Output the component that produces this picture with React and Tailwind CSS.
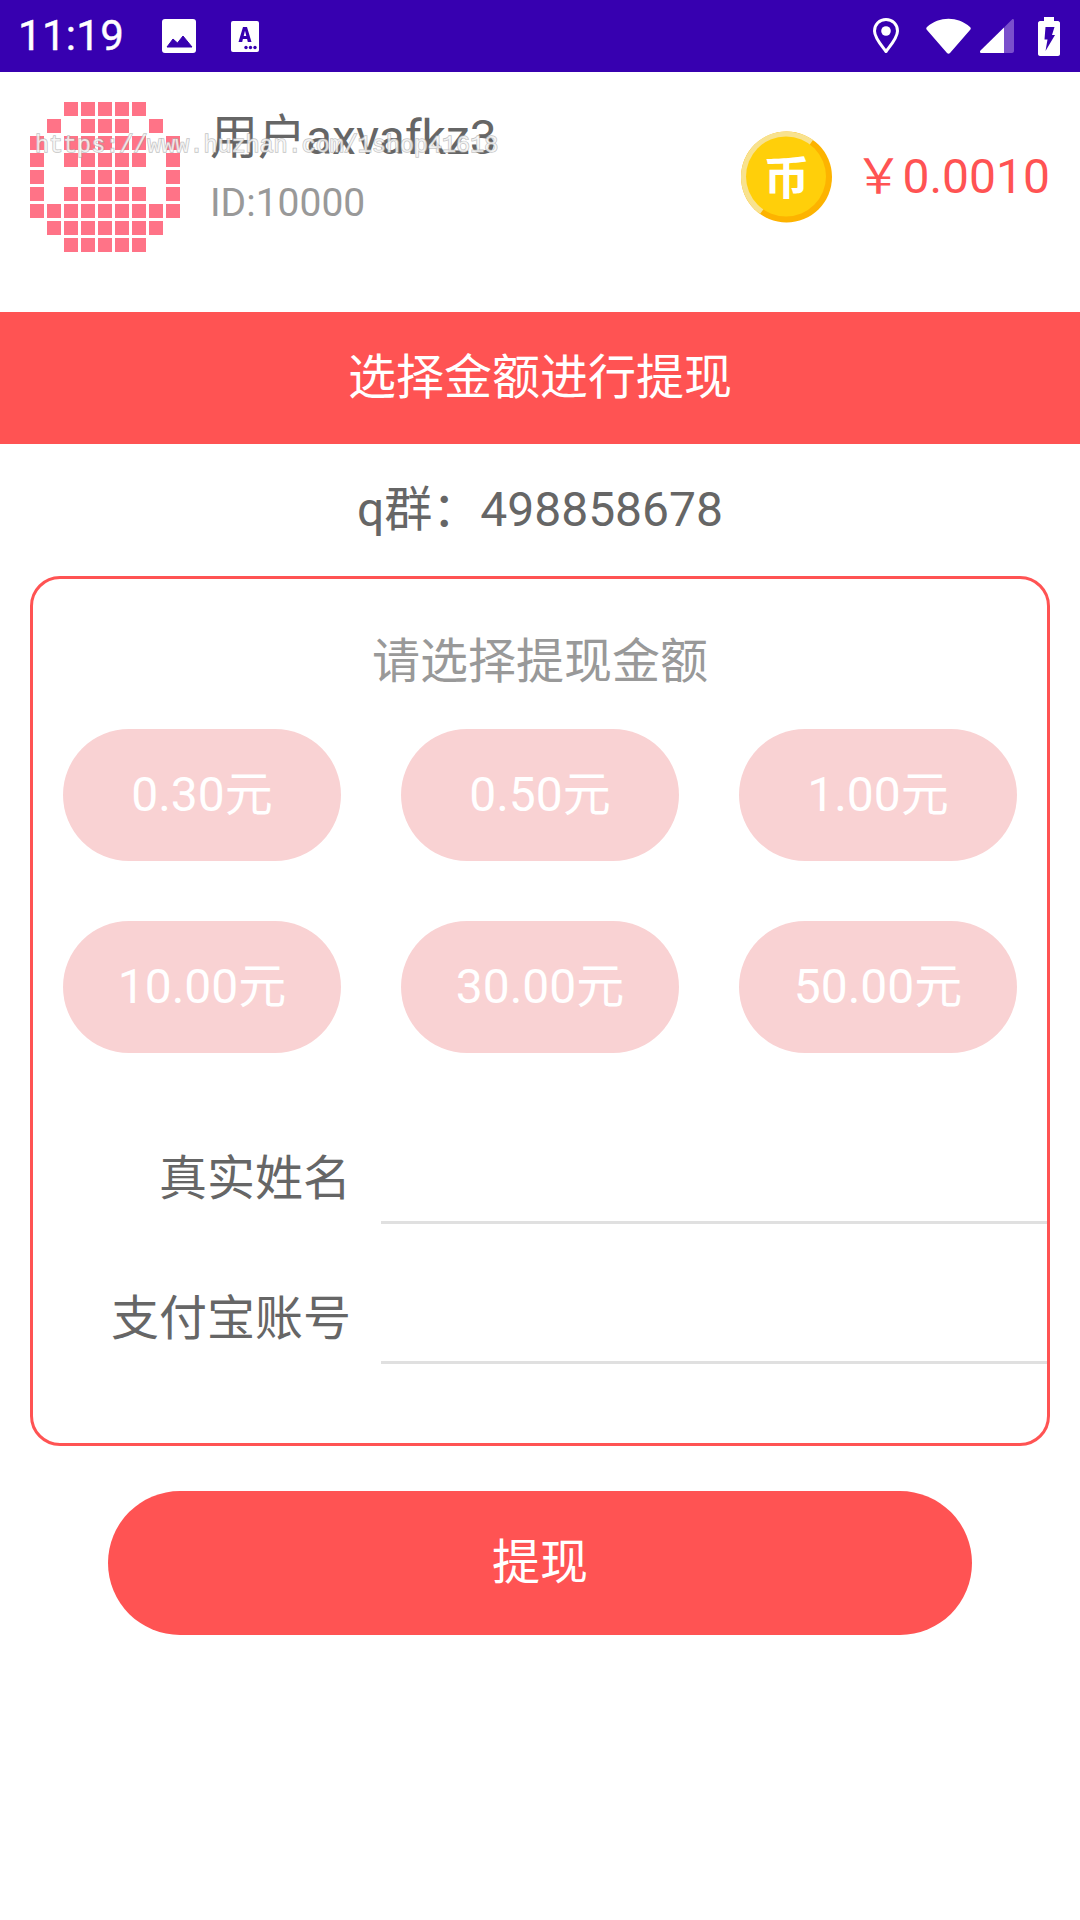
const avatarRows = [
  [2, 3, 4, 5, 6],
  [1, 3, 4, 5, 7],
  [0, 2, 3, 4, 5, 6, 8],
  [0, 2, 3, 4, 5, 6, 8],
  [0, 3, 4, 5, 8],
  [0, 2, 3, 4, 5, 6, 8],
  [0, 1, 2, 3, 4, 5, 6, 7, 8],
  [1, 2, 3, 4, 5, 6, 7],
  [2, 3, 4, 5, 6],
];

const amounts = ["0.30元", "0.50元", "1.00元", "10.00元", "30.00元", "50.00元"];

function StatusBar() {
  return (
    <div className="flex h-[72px] items-center bg-[#3700b0] pl-[18px] pr-[20px] text-white">
      <span className="w-[144px] text-[42px] leading-none tracking-[0.3px] [-webkit-text-stroke:0.4px_#fff]">11:19</span>
      {/* picture icon */}
      <svg width="34" height="34" viewBox="0 0 34 34" className="mr-[35px]">
        <rect width="34" height="34" rx="3" fill="#fff" />
        <path d="M5 28 L11 20 L15.500 24 L21 17 L30 28 Z" fill="#3700b0" strokeLinejoin="round" stroke="#3700b0" strokeWidth="1" />
      </svg>
      {/* keyboard A icon */}
      <svg width="28" height="31" viewBox="0 0 28 31">
        <rect width="28" height="31" rx="2" fill="#fff" />
        <path d="M7.500 21 L12 6 H16 L20.500 21 H16.800 L16.100 18 H11.900 L11.200 21 Z M12.700 15 H15.300 L14 9.800 Z" fill="#3700b0" fillRule="evenodd" />
        <circle cx="15" cy="26.500" r="1.700" fill="#3700b0" />
        <circle cx="19.500" cy="26.500" r="1.700" fill="#3700b0" />
        <circle cx="24" cy="26.500" r="1.700" fill="#3700b0" />
      </svg>
      <div className="flex-1" />
      {/* location */}
      <svg width="26" height="36" viewBox="0 0 26 36" className="mr-[27px]">
        <path d="M13 1.500 C6.500 1.500 1.500 6.500 1.500 13 C1.500 20 9 28 13 33.500 C17 28 24.500 20 24.500 13 C24.500 6.500 19.500 1.500 13 1.500 Z" fill="none" stroke="#fff" strokeWidth="3" strokeLinejoin="round" />
        <circle cx="13" cy="13" r="4.800" fill="#fff" />
      </svg>
      {/* wifi */}
      <svg width="45" height="36" viewBox="0 0 45 36" className="mr-[9px]">
        <path d="M1 9 C13 -2 32 -2 44 9 C45 10 45 11 44 12 L24 35 C23 36 22 36 21 35 L1 12 C0 11 0 10 1 9 Z" fill="#fff" />
      </svg>
      {/* signal */}
      <svg width="34" height="34" viewBox="0 0 34 34" className="mr-[24px]">
        <path d="M24 8.500 L32 .500 C33 -.5 34 .5 34 1.500 V32 C34 33 33 34 32 34 H24 Z" fill="#7a4fcc" />
        <path d="M24 8.500 V34 H1.500 C0 34 -.5 32.500 .500 31.500 Z" fill="#fff" />
      </svg>
      {/* battery */}
      <svg width="22" height="39" viewBox="0 0 22 39">
        <path d="M6 0 H16 V4 H20 C21 4 22 5 22 6 V37 C22 38 21 39 20 39 H2 C1 39 0 38 0 37 V6 C0 5 1 4 2 4 H6 Z" fill="#fff" />
        <path d="M7.500 10 H16.500 L14 18 H17 L7.500 34 L9.500 22.500 H6.500 Z" fill="#3700b0" />
      </svg>
    </div>
  );
}

function Avatar() {
  return (
    <svg width="150" height="150" viewBox="0 0 150 150" className="shrink-0">
      {avatarRows.map((cols, row) =>
        cols.map((col) => (
          <rect key={`${row}-${col}`} x={col * 17} y={row * 17} width="14" height="14" fill="#ff7387" />
        ))
      )}
    </svg>
  );
}

function Coin() {
  return (
    <svg width="91" height="92" viewBox="0 0 91 92" className="shrink-0">
      <circle cx="45.500" cy="46" r="45.500" fill="#fdb300" />
      <path d="M72 9 A45.500 45.500 0 0 0 19 83 Z" fill="#f8e28f" />
      <circle cx="45" cy="45.500" r="40" fill="#ffcf0a" />
      <text x="45.500" y="63" textAnchor="middle" fontSize="46" fontWeight="700" fill="#fff" fontFamily="'Noto Sans CJK SC', sans-serif">币</text>
    </svg>
  );
}

function FormRow({ label, className }) {
  return (
    <div className={`flex items-end ${className}`}>
      <label className="w-[318px] pb-[17px] text-right text-[48px] leading-[56px] text-[#666]">{label}</label>
      <input type="text" className="ml-[30px] h-[91px] flex-1 border-b-[3px] border-[#e0e0e0] bg-transparent outline-none" />
    </div>
  );
}

export default function App() {
  return (
    <div className="relative min-h-[1920px] w-[1080px] bg-white font-[Roboto,'Noto_Sans_CJK_SC',sans-serif]">
      <StatusBar />

      {/* header */}
      <div className="flex h-[240px] items-start px-[30px] pt-[30px]">
        <Avatar />
        <div className="ml-[30px] flex flex-col">
          <span className="mt-[8px] text-[48px] leading-[56px] text-[#666]">用户axvafkz3</span>
          <span className="mt-[14px] text-[39px] leading-[46px] text-[#999]">ID:10000</span>
        </div>
        <div className="ml-auto flex h-[150px] items-center">
          <Coin />
          <span className="ml-[22px] text-[48px] leading-[56px] text-[#ff5353]">￥0.0010</span>
        </div>
      </div>

      {/* watermark from the source image */}
      <span className="absolute left-[35px] top-[133px] font-['Liberation_Mono',monospace] text-[23.4px] leading-[26px] whitespace-nowrap text-white/75 [-webkit-text-stroke:1.4px_#a8a8a8b0] [paint-order:stroke]">
        https://www.huzhan.com/1shop41618
      </span>

      <div className="flex h-[132px] items-center justify-center bg-[#ff5353] text-[48px] text-white">选择金额进行提现</div>

      <div className="flex h-[132px] items-center justify-center text-[48px] text-[#666]">q群：498858678</div>

      {/* withdraw card */}
      <div className="mx-[30px] h-[870px] rounded-[30px] border-[3px] border-[#ff5353]">
        <div className="mt-[55px] text-center text-[48px] leading-[56px] text-[#999]">请选择提现金额</div>
        <div className="mt-[39px] grid grid-cols-3 gap-x-[60px] gap-y-[60px] px-[30px]">
          {amounts.map((amount) => (
            <div key={amount} className="flex h-[132px] items-center justify-center rounded-full bg-[#f9d2d3] text-[48px] text-white">
              {amount}
            </div>
          ))}
        </div>
        <FormRow label="真实姓名" className="mt-[80px]" />
        <FormRow label="支付宝账号" className="mt-[49px]" />
      </div>

      <button className="mx-[108px] mt-[45px] flex h-[144px] w-[864px] items-center justify-center rounded-full bg-[#ff5353] text-[48px] text-white">
        提现
      </button>
    </div>
  );
}
